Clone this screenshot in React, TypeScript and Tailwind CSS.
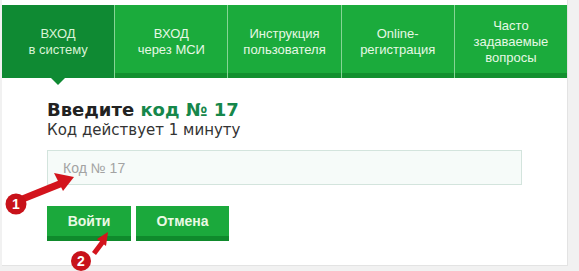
import React from 'react';

const tabs = [
  { lines: ['ВХОД', 'в систему'], active: true },
  { lines: ['ВХОД', 'через МСИ'] },
  { lines: ['Инструкция', 'пользователя'] },
  { lines: ['Online-', 'регистрация'] },
  { lines: ['Часто', 'задаваемые', 'вопросы'] },
];

const Annotations: React.FC = () => (
  <svg className="absolute inset-0 pointer-events-none" width={579} height={271} viewBox="0 0 579 271">
    {/* arrow 1 */}
    <polygon points="18,197 22,203 62,187 60,180" fill="#d3141c" />
    <polygon points="74,177 54,173 63,191" fill="#d3141c" />
    <circle cx={16} cy={204} r={10.5} fill="#c8121a" />
    <text x={16} y={209} textAnchor="middle" fontFamily="Liberation Sans, Arial, sans-serif" fontWeight="bold" fontSize={14} fill="#fff">1</text>
    {/* arrow 2 */}
    <polygon points="92,252 96,255 105,243 101,240" fill="#d3141c" />
    <polygon points="108,232 97,239 106,246" fill="#d3141c" />
    <circle cx={81} cy={261} r={10} fill="#c8121a" />
    <text x={81} y={266} textAnchor="middle" fontFamily="Liberation Sans, Arial, sans-serif" fontWeight="bold" fontSize={14} fill="#fff">2</text>
  </svg>
);

export default function App() {
  return (
    <div className="relative w-[579px] h-[271px] overflow-hidden bg-[#f1f1f1] font-['Liberation_Sans',Arial,sans-serif]">
      <div className="ml-[2px] w-[566px] h-[266px] bg-white border-r border-b border-[#e3e3e3] pt-[5px]">
        <div className="flex h-[73px]">
          {tabs.map((t, i) => (
            <div
              key={i}
              className={
                'relative flex-1 flex flex-col items-center justify-center text-center text-[13px] leading-[16px] ' +
                (t.active
                  ? 'bg-[#0f8a33] text-[#d8f3d6]'
                  : 'bg-[#1bab3c] text-[#e6f8e4] border-l border-[#86d495] shadow-[inset_0_-5px_0_#12902f]')
              }
            >
              {t.lines.map((l) => (
                <div key={l}>{l}</div>
              ))}
              {t.active && (
                <div className="absolute left-1/2 -translate-x-1/2 top-full w-0 h-0 border-l-[7px] border-r-[7px] border-t-[7px] border-l-transparent border-r-transparent border-t-[#0f8a33]" />
              )}
            </div>
          ))}
        </div>
        <div className="pl-[45px] pt-[21px]">
          <div className="font-['DejaVu_Sans',Verdana,sans-serif] font-bold text-[18px] leading-[22px] text-[#222]">
            Введите <span className="text-[#16874b]">код № 17</span>
          </div>
          <div className="font-['DejaVu_Sans',Verdana,sans-serif] text-[15px] leading-[18px] text-[#333]">
            Код действует 1 минуту
          </div>
          <input
            className="mt-[11px] block w-[475px] h-[35px] bg-[#f6fbf9] border border-[#d3e4dd] pl-[15px] text-[14px] outline-none placeholder:text-[#a3a3a3]"
            placeholder="Код № 17"
          />
          <div className="mt-[21px] flex gap-[5px]">
            <button className="w-[84px] h-[35px] bg-[#1ba93c] border-b-[5px] border-[#0f8a2c] text-[#eaf9e4] font-bold text-[14px]">
              Войти
            </button>
            <button className="w-[93px] h-[35px] bg-[#1ba93c] border-b-[5px] border-[#0f8a2c] text-[#eaf9e4] font-bold text-[14px]">
              Отмена
            </button>
          </div>
        </div>
      </div>
      <Annotations />
    </div>
  );
}
